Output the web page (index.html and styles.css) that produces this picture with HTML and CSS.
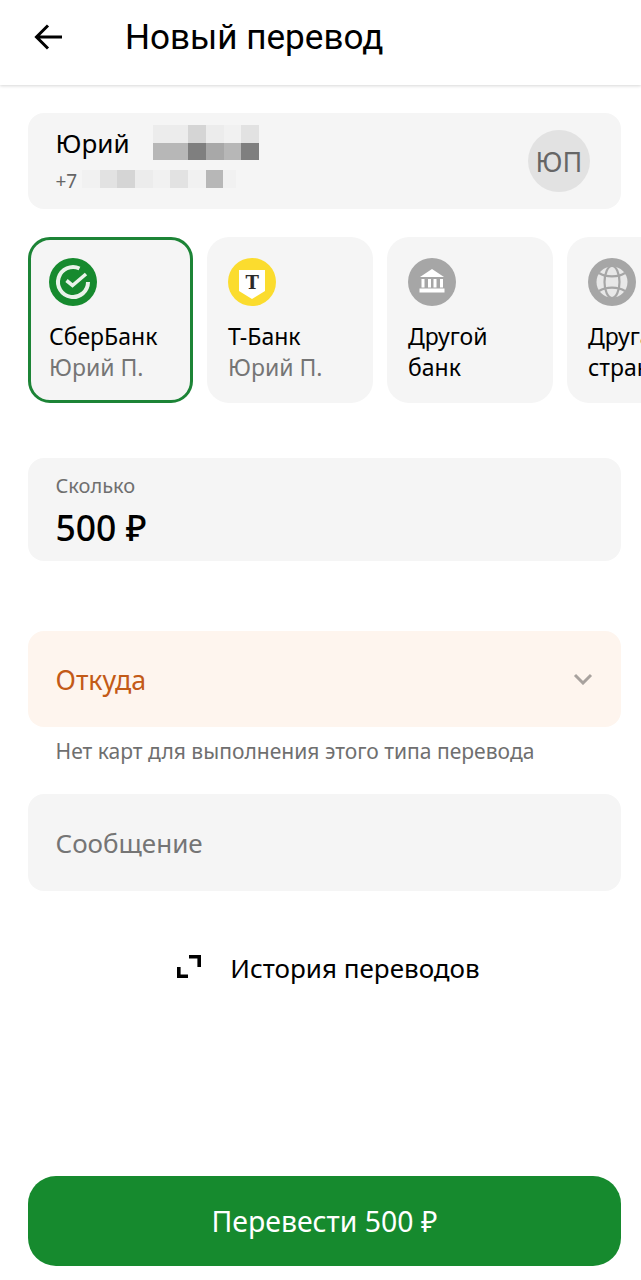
FILE: index.html
```html
<!DOCTYPE html>
<html lang="ru">
<head>
  <meta charset="UTF-8" />
  <meta name="viewport" content="width=device-width, initial-scale=1.0" />
  <title>Новый перевод</title>
  <link rel="stylesheet" href="styles.css">
</head>
<body>
  <header class="topbar">
    <svg class="back" width="30" height="28" viewBox="0 0 30 28">
      <path d="M28 14H3M14 2.5 2.5 14 14 25.5" fill="none" stroke="#000" stroke-width="3"/>
    </svg>
    <h1>Новый перевод</h1>
  </header>

  <main class="content">
    <section class="recipient">
      <div class="recipient-text">
        <div class="name-row">
          <span class="name">Юрий</span>
          <div class="mosaic mosaic-name">
            <div class="px-row">
              <i class="s2"></i><i class="s2"></i><i class="s4"></i><i class="s2"></i><i class="s1"></i><i class="s3"></i>
            </div>
            <div class="px-row">
              <i class="s6"></i><i class="s6"></i><i class="s8"></i><i class="s7"></i><i class="s6"></i><i class="s8"></i>
            </div>
          </div>
        </div>
        <div class="phone-row">
          <span class="phone">+7</span>
          <div class="px-row">
            <i class="s1"></i><i class="s3"></i><i class="s4"></i><i class="s2"></i><i class="s1"></i><i class="s3"></i><i class="s1"></i><i class="s6"></i><i class="s1 narrow"></i>
          </div>
        </div>
      </div>
      <div class="avatar">ЮП</div>
    </section>

    <div class="banks">
      <div class="bank selected">
        <svg class="bank-icon" viewBox="0 0 48 48">
          <circle cx="24" cy="24" r="24" fill="#168a2e"/>
          <path d="M30.5 10.5A15 15 0 1 0 39 24" fill="none" stroke="#e9f3ea" stroke-width="4"/>
          <path d="M17.5 22.5 23.5 27.5 37 16" fill="none" stroke="#e9f3ea" stroke-width="3.6"/>
        </svg>
        <div class="bank-title">СберБанк</div>
        <div class="bank-sub">Юрий П.</div>
      </div>
      <div class="bank">
        <svg class="bank-icon" viewBox="0 0 48 48">
          <circle cx="24" cy="24" r="24" fill="#fbdc2e"/>
          <path d="M11 12H37V33L24 41 11 33Z" fill="#fff"/>
          <text x="24.3" y="31" text-anchor="middle" class="t-mark">Т</text>
        </svg>
        <div class="bank-title">Т-Банк</div>
        <div class="bank-sub">Юрий П.</div>
      </div>
      <div class="bank">
        <svg class="bank-icon" viewBox="0 0 48 48">
          <circle cx="24" cy="24" r="24" fill="#a6a6a6"/>
          <path d="M24 11 36 19H12Z" fill="#fff"/>
          <path d="M13.5 21h3v8.5h-3zM20 21h3v8.5h-3zM25.5 21h3v8.5h-3zM32 21h3v8.5h-3zM11.5 30.5h25v4h-25z" fill="#fff"/>
        </svg>
        <div class="bank-title">Другой<br>банк</div>
      </div>
      <div class="bank">
        <svg class="bank-icon" viewBox="0 0 48 48">
          <circle cx="24" cy="24" r="24" fill="#a6a6a6"/>
          <circle cx="24" cy="24" r="15.5" fill="#e8e8e8"/>
          <g fill="none" stroke="#a6a6a6" stroke-width="2.2">
            <ellipse cx="24" cy="24" rx="7.5" ry="16"/>
            <path d="M11 15C18 19.5 30 19.5 37 15M11 33C18 28.5 30 28.5 37 33"/>
          </g>
        </svg>
        <div class="bank-title">Другая<br>страна</div>
      </div>
    </div>

    <section class="field amount">
      <div class="field-label">Сколько</div>
      <div class="amount-value">500 ₽</div>
    </section>

    <section class="field source">
      <span class="source-label">Откуда</span>
      <svg width="20" height="12" viewBox="0 0 20 12">
        <path d="M2 2 10 10 18 2" fill="none" stroke="#a8a29e" stroke-width="3"/>
      </svg>
    </section>
    <p class="hint">Нет карт для выполнения этого типа перевода</p>

    <section class="field message">Сообщение</section>

    <div class="history">
      <svg width="26" height="26" viewBox="0 0 26 26">
        <path d="M12 1.8H22.2V12M1.8 12V21.2H11" fill="none" stroke="#000" stroke-width="3.6"/>
      </svg>
      <span>История переводов</span>
    </div>

    <button class="submit">Перевести 500 ₽</button>
  </main>
</body>
</html>
```

FILE: styles.css
```css
* {
  box-sizing: border-box;
}
body {
  margin: 0;
  height: 1280px;
  overflow: hidden;
  background: #fff;
  color: #000;
  font-family: "Noto Sans", "Open Sans", sans-serif;
}

.topbar {
  height: 85px;
  display: flex;
  align-items: center;
  padding: 0 0 11px 34px;
  background: #fff;
  box-shadow: 0 1px 3px rgba(0, 0, 0, 0.16);
}
.topbar h1 {
  margin: 0 0 0 61px;
  font-family: Roboto, sans-serif;
  font-size: 35.1px;
  font-weight: 400;
}

.content {
  padding: 28px 20px 0 28px;
}

.recipient {
  height: 96px;
  display: flex;
  justify-content: space-between;
  align-items: center;
  padding: 0 31px 0 27.5px;
  background: #f5f5f5;
  border-radius: 16px;
}
.recipient-text {
  align-self: flex-start;
  padding-top: 12px;
}
.name-row {
  display: flex;
  align-items: center;
  height: 35px;
}
.name {
  width: 97.5px;
  font-size: 26px;
}
.phone-row {
  display: flex;
  align-items: center;
  height: 18px;
  margin-top: 10px;
}
.phone {
  width: 26.5px;
  padding-top: 4px;
  font-size: 19px;
  color: #666;
}
.px-row {
  display: flex;
}
.px-row i {
  display: block;
  width: 17.67px;
  height: 18px;
}
.px-row i.narrow {
  width: 13px;
}
.mosaic-name .px-row:last-child i {
  height: 17px;
}
.s1 { background: #f1f1f1; }
.s2 { background: #ececec; }
.s3 { background: #e2e2e2; }
.s4 { background: #d5d5d5; }
.s6 { background: #b7b7b7; }
.s7 { background: #a8a8a8; }
.s8 { background: #7f7f7f; }
.avatar {
  width: 62px;
  height: 62px;
  display: flex;
  align-items: center;
  justify-content: center;
  border-radius: 50%;
  background: #e2e2e2;
  color: #666;
  font-size: 27px;
}

.banks {
  display: flex;
  gap: 14px;
  margin: 28px -20px 0 0;
  overflow: hidden;
}
.bank {
  flex: 0 0 166px;
  height: 166px;
  padding: 21px 10px 0 21px;
  background: #f5f5f5;
  border-radius: 22px;
  white-space: nowrap;
}
.bank.selected {
  flex-basis: 165px;
  padding: 18px 8px 0 18px;
  border: 3px solid #1c8436;
}
.bank-icon {
  display: block;
  width: 48px;
  height: 48px;
  margin-bottom: 15px;
}
.t-mark {
  font-family: "DejaVu Serif", serif;
  font-size: 18px;
  font-weight: 700;
  fill: #2b2b2b;
}
.bank-title,
.bank-sub {
  font-size: 23px;
  line-height: 31px;
}
.bank-sub {
  color: #757575;
}

.field {
  background: #f5f5f5;
  border-radius: 16px;
  padding: 0 27.5px;
}
.amount {
  height: 103px;
  margin-top: 55px;
  padding-top: 14px;
}
.field-label {
  font-size: 20px;
  line-height: 28px;
  color: #6f6f6f;
}
.amount-value {
  margin-top: 4px;
  font-size: 35.5px;
  line-height: 46px;
  font-weight: 500;
}
.source {
  height: 96px;
  margin-top: 70px;
  display: flex;
  align-items: center;
  justify-content: space-between;
  padding-right: 28px;
  background: #fef5ee;
}
.source-label {
  font-size: 26.8px;
  color: #c35a17;
}
.hint {
  margin: 10px 0 0 27.5px;
  font-size: 21.05px;
  line-height: 28px;
  color: #6f6f6f;
}
.message {
  height: 97px;
  margin-top: 29px;
  display: flex;
  align-items: center;
  font-size: 26px;
  color: #757575;
}
.history {
  display: flex;
  align-items: center;
  justify-content: center;
  gap: 27px;
  margin-top: 60px;
  height: 34px;
  padding-left: 8px;
  font-size: 26px;
}
.submit {
  display: block;
  width: 100%;
  height: 90px;
  margin-top: 191px;
  border: 0;
  border-radius: 28px;
  background: #168a2e;
  color: #fff;
  font-family: inherit;
  font-size: 28.4px;
}
```
